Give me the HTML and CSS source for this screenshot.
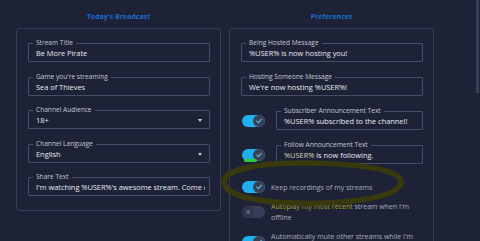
FILE: index.html
```html
<!DOCTYPE html>
<html>
<head>
<meta charset="utf-8">
<link rel="stylesheet" href="styles.css">
</head>
<body>
<div class="page">
  <section class="col">
    <h2 class="heading">Today's Broadcast</h2>
    <div class="card card-left">
      <div class="field"><span class="label">Stream Title</span><div class="value">Be More Pirate</div></div>
      <div class="field"><span class="label">Game you're streaming</span><div class="value">Sea of Thieves</div></div>
      <div class="field"><span class="label">Channel Audience</span><div class="value">18+</div><span class="caret"></span></div>
      <div class="field"><span class="label">Channel Language</span><div class="value">English</div><span class="caret"></span></div>
      <div class="field"><span class="label">Share Text</span><div class="value clip">I'm watching %USER%'s awesome stream. Come check it out!</div></div>
    </div>
  </section>
  <section class="col">
    <h2 class="heading">Preferences</h2>
    <div class="card card-open">
      <div class="field"><span class="label">Being Hosted Message</span><div class="value">%USER% is now hosting you!</div></div>
      <div class="field"><span class="label">Hosting Someone Message</span><div class="value">We're now hosting %USER%!</div></div>
      <div class="trow">
        <span class="toggle on"><span class="knob"><svg viewBox="0 0 10 10" width="8" height="8"><path d="M2.2 5.2 L4.2 7.1 L7.9 3" fill="none" stroke="#5cc8f5" stroke-width="1.3" stroke-linecap="round" stroke-linejoin="round"/></svg></span></span>
        <div class="field grow"><span class="label">Subscriber Announcement Text</span><div class="value">%USER% subscribed to the channel!</div></div>
      </div>
      <div class="trow">
        <span class="toggle on"><span class="knob"><svg viewBox="0 0 10 10" width="8" height="8"><path d="M2.2 5.2 L4.2 7.1 L7.9 3" fill="none" stroke="#5cc8f5" stroke-width="1.3" stroke-linecap="round" stroke-linejoin="round"/></svg></span><span class="scribble"></span></span>
        <div class="field grow"><span class="label">Follow Announcement Text</span><div class="value"><span class="tint">%USER%</span> is now following.</div></div>
      </div>
      <div class="trow plain first">
        <span class="toggle on"><span class="knob"><svg viewBox="0 0 10 10" width="8" height="8"><path d="M2.2 5.2 L4.2 7.1 L7.9 3" fill="none" stroke="#5cc8f5" stroke-width="1.3" stroke-linecap="round" stroke-linejoin="round"/></svg></span></span>
        <span class="opt">Keep recordings of my streams</span>
      </div>
      <div class="trow plain">
        <span class="toggle off"><span class="knob"><svg viewBox="0 0 10 10" width="8" height="8"><path d="M3 3 L7 7 M7 3 L3 7" fill="none" stroke="#7a8096" stroke-width="1.2" stroke-linecap="round"/></svg></span></span>
        <span class="opt"><span class="hl">Autoplay my most recent</span> stream when I'm offline</span>
      </div>
      <div class="trow plain">
        <span class="toggle on"><span class="knob"><svg viewBox="0 0 10 10" width="8" height="8"><path d="M2.2 5.2 L4.2 7.1 L7.9 3" fill="none" stroke="#5cc8f5" stroke-width="1.3" stroke-linecap="round" stroke-linejoin="round"/></svg></span></span>
        <span class="opt">Automatically mute other streams while I'm live</span>
      </div>
    </div>
  </section>
</div>
<svg class="annot" width="480" height="241" viewBox="0 0 480 241">
  <path d="M262 165 C 300 161, 360 163, 390 172 C 410 180, 402 192, 372 198 C 342 204, 292 205, 258 200 C 232 196, 220 187, 225 178 C 230 171, 244 167, 272 164" fill="none" stroke="#383a0e" stroke-width="5.5" stroke-linecap="round"/>
</svg>
<div class="scrollbar"></div>
</body>
</html>
```
FILE: styles.css
```css
html, body {
  margin: 0;
  padding: 0;
  background: #1d2237;
  width: 480px;
  height: 241px;
  overflow: hidden;
  font-family: "Open Sans", "Noto Sans", sans-serif;
  color: #e4e6ee;
}
.page {
  display: grid;
  grid-template-columns: 205px 205px;
  column-gap: 8px;
  padding-left: 16px;
}
.col {
  display: flex;
  flex-direction: column;
}
.heading {
  margin: 0;
  height: 28px;
  line-height: 33px;
  text-align: center;
  font-size: 7px;
  font-weight: 700;
  color: #1a6dc9;
}
.card {
  border: 1px solid #373d55;
  border-radius: 3px;
  padding: 14px 10px 14px 11px;
  display: flex;
  flex-direction: column;
  gap: 15px;
}
.card-left {
  gap: 14.5px;
}
.card-open {
  border-bottom: none;
  height: 300px;
}
.field {
  position: relative;
  border: 1px solid #474d66;
  border-radius: 1px;
  height: 19px;
  box-sizing: border-box;
  padding: 0 16px 0 7px;
  min-width: 0;
}
.label {
  position: absolute;
  left: 4px;
  top: -5px;
  padding: 0 3px;
  background: #1d2237;
  font-size: 6.6px;
  line-height: 8px;
  color: #c4c8d4;
  white-space: nowrap;
}
.value {
  font-size: 7.4px;
  line-height: 17px;
  color: #e8eaf0;
  white-space: nowrap;
  padding-top: 1px;
}
.clip {
  overflow: hidden;
  margin-right: -12px;
}
.caret {
  position: absolute;
  right: 7px;
  top: 8px;
  width: 0;
  height: 0;
  border-left: 2.5px solid transparent;
  border-right: 2.5px solid transparent;
  border-top: 3px solid #c8ccd6;
}
.trow {
  display: flex;
  align-items: center;
  gap: 11px;
  padding-left: 1px;
}
.grow {
  flex: 1;
}
.trow.plain {
  gap: 6px;
  margin-top: -7px;
}
.trow.first {
  margin-top: 2px;
}
.toggle {
  position: relative;
  flex: none;
  width: 23px;
  height: 12px;
  border-radius: 6px;
  display: flex;
  align-items: center;
}
.toggle.on {
  background: #1fb0f0;
  justify-content: flex-end;
}
.toggle.off {
  background: #373d55;
  justify-content: flex-start;
}
.knob {
  width: 12px;
  height: 12px;
  border-radius: 50%;
  background: #3a3f56;
  display: flex;
  align-items: center;
  justify-content: center;
}
.toggle.off .knob {
  background: #30354b;
}
.scribble {
  position: absolute;
  left: 2px;
  bottom: -1px;
  width: 13px;
  height: 3px;
  border-radius: 2px;
  background: #2fc93a;
}
.opt {
  font-size: 7px;
  line-height: 11px;
  color: #a9adbb;
  width: 150px;
}
.hl {
  color: #a4a61c;
}
.tint {
  color: #d6d8b0;
}
.annot {
  position: absolute;
  left: 0;
  top: 0;
  pointer-events: none;
}
.scrollbar {
  position: absolute;
  right: 1px;
  top: 0;
  width: 3px;
  height: 93px;
  background: #3a3f56;
}
```
